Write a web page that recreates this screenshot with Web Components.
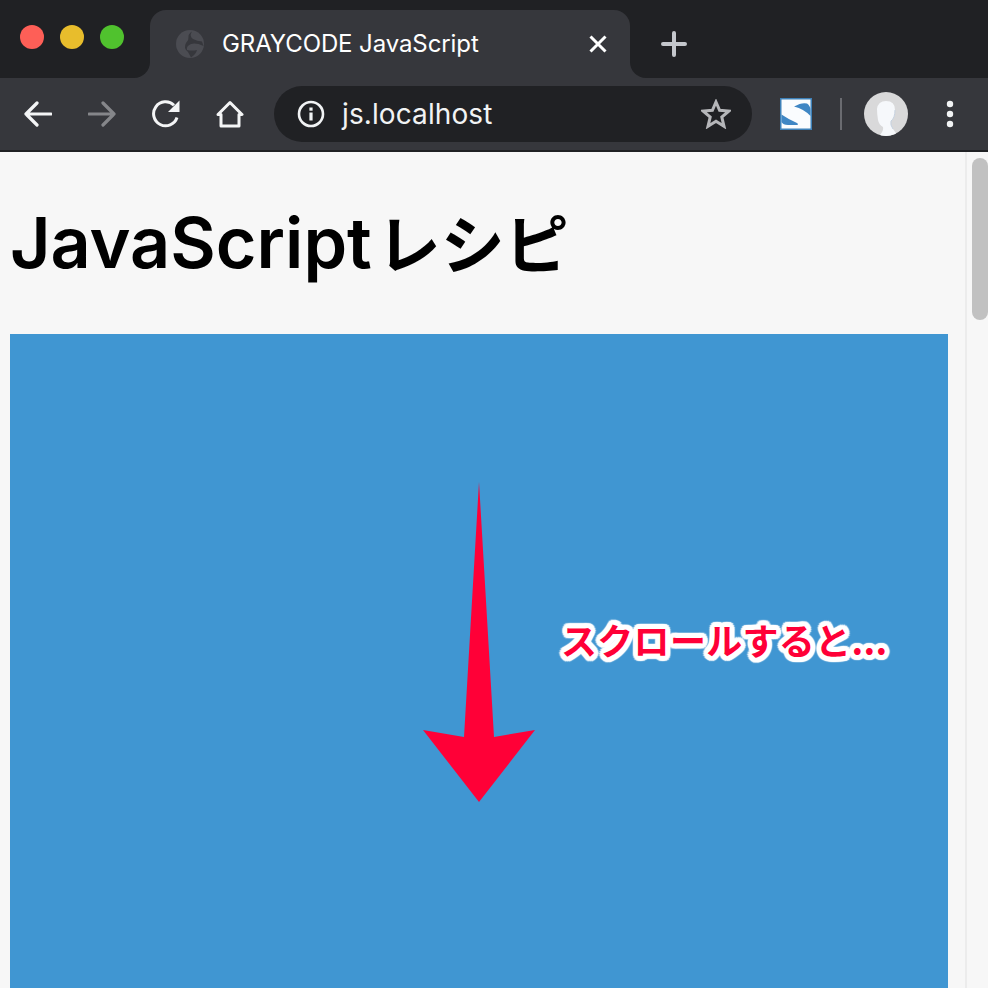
<!DOCTYPE html>
<html lang="ja">
<head>
<meta charset="utf-8">
<title>GRAYCODE JavaScript</title>
<style>
  html, body { margin: 0; height: 100%; overflow: hidden; background: #f7f7f7; }
</style>
</head>
<body>
<browser-window>
  <tab-strip title-text="GRAYCODE JavaScript"></tab-strip>
  <nav-toolbar url="js.localhost"></nav-toolbar>
  <page-view>
    <recipe-demo latin="JavaScript" kana="レシピ" caption="スクロールすると..."></recipe-demo>
  </page-view>
</browser-window>

<script>
class BrowserWindow extends HTMLElement {
  constructor() {
    super();
    this.attachShadow({ mode: 'open' });
    this.shadowRoot.innerHTML = `
      <style>
        :host { display: flex; flex-direction: column; width: 988px; height: 988px; overflow: hidden; }
      </style>
      <slot></slot>
    `;
  }
}

class TabStrip extends HTMLElement {
  constructor() {
    super();
    this.attachShadow({ mode: 'open' });
    this.shadowRoot.innerHTML = `
      <style>
        :host { display: flex; flex: none; height: 78px; background: #36373c; font-family: Inter, "Liberation Sans", sans-serif; }
        .lead { width: 150px; flex: none; background: #202124; border-bottom-right-radius: 16px; display: flex; gap: 16px; padding: 25px 0 0 20px; box-sizing: border-box; }
        .dot { width: 24px; height: 24px; border-radius: 50%; }
        .tab-wrap { width: 480px; flex: none; background: #202124; padding-top: 10px; box-sizing: border-box; }
        .tab { height: 68px; background: #36373c; border-radius: 16px 16px 0 0; display: flex; align-items: flex-start; padding: 20px 20px 0 26px; box-sizing: border-box; color: #fff; }
        .globe { width: 28px; height: 28px; flex: none; margin-right: 18px; }
        .title { flex: 1; font-size: 24px; line-height: 28px; white-space: nowrap; letter-spacing: -0.1px; }
        .close { width: 24px; height: 28px; flex: none; }
        .rest { flex: 1; background: #202124; border-bottom-left-radius: 16px; padding: 31px 0 0 31px; box-sizing: border-box; }
        svg { display: block; }
      </style>
      <div class="lead">
        <div class="dot" style="background:#fe5f57"></div>
        <div class="dot" style="background:#e8bd2c"></div>
        <div class="dot" style="background:#50c22e"></div>
      </div>
      <div class="tab-wrap">
        <div class="tab">
          <svg class="globe" viewBox="0 0 28 28">
            <circle cx="14" cy="14" r="14" fill="#4b4c52"/>
            <path d="M16 1.5 Q13 6 17 9 Q21 11 26 11.5 L27.5 16 Q20 12.5 15 14 Q10 16 11 20 Q16 21 21 20 Q20 24 15 27.5 L12 22 Q7 18 10 13 Q13 10 12.5 7 Q12 4 16 1.5Z" fill="#36373c"/>
          </svg>
          <div class="title">${this.getAttribute('title-text')}</div>
          <svg class="close" viewBox="0 0 24 28"><path d="M4.5 6.5 L19.5 21.5 M19.5 6.5 L4.5 21.5" stroke="#fff" stroke-width="3" fill="none"/></svg>
        </div>
      </div>
      <div class="rest">
        <svg width="26" height="26" viewBox="0 0 26 26"><path d="M13 2 V24 M2 13 H24" stroke="#c4c7cc" stroke-width="4" stroke-linecap="round" fill="none"/></svg>
      </div>
    `;
  }
}

class NavToolbar extends HTMLElement {
  constructor() {
    super();
    this.attachShadow({ mode: 'open' });
    this.shadowRoot.innerHTML = `
      <style>
        :host { display: flex; align-items: center; flex: none; height: 74px; box-sizing: border-box; background: #36373c; border-bottom: 2px solid #202124; font-family: Inter, "Liberation Sans", sans-serif; }
        svg { display: block; flex: none; }
        .nav { display: flex; align-items: center; }
        .omnibox { width: 478px; height: 56px; flex: none; margin-left: 30px; background: #202124; border-radius: 28px; display: flex; align-items: center; box-sizing: border-box; padding: 0 21px 0 23px; color: #fff; }
        .url { flex: 1; font-size: 28px; margin-left: 17px; color: #f1f3f4; letter-spacing: 0.1px; }
        .sep { width: 2px; height: 32px; background: #6a6b70; margin: 0 22px 0 28px; flex: none; }
      </style>
      <div class="nav" style="padding-left:24px">
        <svg width="28" height="28" viewBox="0 0 28 28"><path d="M27 14 H2 M13 3 L2 14 L13 25" stroke="#f4f5f6" stroke-width="3.2" stroke-linecap="round" stroke-linejoin="round" fill="none"/></svg>
        <svg style="margin-left:36px" width="28" height="28" viewBox="0 0 28 28"><path d="M1 14 H26 M15 3 L26 14 L15 25" stroke="#85868a" stroke-width="3.2" stroke-linecap="round" stroke-linejoin="round" fill="none"/></svg>
        <svg style="margin-left:36px" width="28" height="28" viewBox="0 0 28 28"><path d="M25 17.5 A12 12 0 1 1 22 5.2" stroke="#f4f5f6" stroke-width="3" fill="none"/><path d="M27.5 0.5 V12 H16Z" fill="#f4f5f6"/></svg>
        <svg style="margin-left:36px" width="28" height="28" viewBox="0 0 28 28"><path d="M2 14.5 L14 2.5 L26 14.5 H23 V26 H5 V14.5Z" stroke="#f4f5f6" stroke-width="3" stroke-linejoin="round" fill="none"/></svg>
      </div>
      <div class="omnibox">
        <svg width="28" height="28" viewBox="0 0 28 28"><circle cx="14" cy="14" r="12" stroke="#f1f3f4" stroke-width="2.6" fill="none"/><rect x="12.4" y="12.5" width="3.2" height="8" fill="#f1f3f4"/><rect x="12.4" y="7.5" width="3.2" height="3.2" fill="#f1f3f4"/></svg>
        <span class="url">${this.getAttribute('url')}</span>
        <svg width="30" height="30" viewBox="0 0 30 30"><path d="M15 3 L18.6 11.3 L28 12 L20.8 18.1 L23 27.3 L15 22.3 L7 27.3 L9.2 18.1 L2 12 L11.4 11.3Z" stroke="#b5b6b9" stroke-width="3" fill="none"/></svg>
      </div>
      <svg style="margin-left:28px" width="32" height="32" viewBox="0 0 32 32">
        <rect width="32" height="32" fill="#3d80b8"/>
        <rect x="1.5" y="1.5" width="29" height="29" fill="#fafcfe"/>
        <path d="M14 8.5 Q22 4 27 5.5 Q30.5 8 30.5 12 V18 Q24 11 14 8.5Z" fill="#3f86c4"/>
        <path d="M1.5 16.5 Q8 21 17 25 Q20 27 15 27 H8 Q3 27 1.5 24Z" fill="#3f86c4"/>
      </svg>
      <div class="sep"></div>
      <svg width="44" height="44" viewBox="0 0 44 44">
        <clipPath id="av"><circle cx="22" cy="22" r="22"/></clipPath>
        <g clip-path="url(#av)">
          <rect width="44" height="44" fill="#d9d9da"/>
          <path d="M13 17 Q14 9 22 9 Q31 9 31 18 Q31 26 27 29 Q26 33 29 37 L34 44 H15 Q20 39 19 35 Q15 33 14 28 Q13 22 13 17Z" fill="#f6f8fb"/>
          <path d="M31 18 Q31 26 27 29 Q26 33 29 37" stroke="#c6d2e0" stroke-width="1" fill="none"/>
        </g>
      </svg>
      <svg style="margin-left:36px" width="12" height="28" viewBox="0 0 12 28"><circle cx="6" cy="4" r="3.2" fill="#f1f3f4"/><circle cx="6" cy="14" r="3.2" fill="#f1f3f4"/><circle cx="6" cy="24" r="3.2" fill="#f1f3f4"/></svg>
    `;
  }
}

class PageView extends HTMLElement {
  constructor() {
    super();
    this.attachShadow({ mode: 'open' });
    this.shadowRoot.innerHTML = `
      <style>
        :host { display: flex; flex: 1; min-height: 0; background: #f7f7f7; }
        .content { flex: 1; min-width: 0; overflow: hidden; }
        .track { width: 23px; flex: none; border-left: 2px solid #ececec; box-sizing: border-box; background: #f7f7f7; padding: 6px 0 0 5px; }
        .thumb { width: 16px; height: 162px; background: #c1c1c1; border-radius: 8px; }
      </style>
      <div class="content"><slot></slot></div>
      <div class="track"><div class="thumb"></div></div>
    `;
  }
}

class RecipeDemo extends HTMLElement {
  constructor() {
    super();
    this.attachShadow({ mode: 'open' });
    // round white outline round the caption, made of shadows in 16 directions
    const outline = Array.from({ length: 16 }, (_, i) => {
      const a = i * Math.PI / 8;
      return `${(5 * Math.cos(a)).toFixed(2)}px ${(5 * Math.sin(a)).toFixed(2)}px 1px #fff`;
    }).join(', ');
    this.shadowRoot.innerHTML = `
      <style>
        :host { display: block; padding: 0 17px 0 10px; font-family: "Noto Sans CJK JP", sans-serif; }
        h1 { margin: 0; height: 182px; box-sizing: border-box; padding-top: 50px; font-size: 64px; line-height: 76px; font-weight: 700; color: #000; white-space: nowrap; display: flex; align-items: baseline; }
        .latin { font-family: Inter, "Liberation Sans", sans-serif; font-size: 70px; font-weight: 600; margin-right: 5px; }
        .panel { position: relative; height: 700px; background: #4096d2; }
        svg { position: absolute; left: 413px; top: 148px; }
        .caption { position: absolute; left: 551px; top: 281px; font-size: 36px; line-height: 48px; font-weight: 700; letter-spacing: 0.3px; color: #ff0037; white-space: nowrap; text-shadow: ${outline}; }
      </style>
      <h1><span class="latin">${this.getAttribute('latin')}</span><span>${this.getAttribute('kana')}</span></h1>
      <div class="panel">
        <svg width="112" height="320" viewBox="0 0 112 320"><polygon points="56,0 71,255 112,248 56,320 0,248 41,255" fill="#ff0037"/></svg>
        <div class="caption">${this.getAttribute('caption')}</div>
      </div>
    `;
  }
}

customElements.define('browser-window', BrowserWindow);
customElements.define('tab-strip', TabStrip);
customElements.define('nav-toolbar', NavToolbar);
customElements.define('page-view', PageView);
customElements.define('recipe-demo', RecipeDemo);
</script>
</body>
</html>
